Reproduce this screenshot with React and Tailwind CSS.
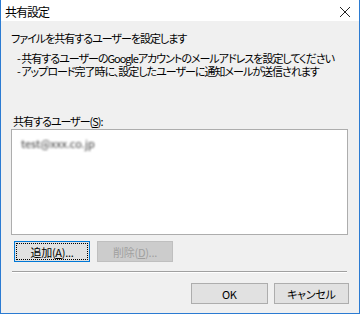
export default function App() {
  const font = { fontFamily: '"Noto Sans CJK JP", "Noto Sans", sans-serif' };
  return (
    <div className="w-[360px] h-[314px] bg-white overflow-hidden" style={font}>
      <div className="w-[360px] h-[314px] flex flex-col border-l border-r border-b border-[#2b7bd2] bg-[#f0f0f0] text-[11px] leading-[14px] tracking-[-1px] text-black whitespace-nowrap [font-feature-settings:'palt']">
        <div className="h-[21px] shrink-0 bg-white flex items-center justify-between pl-[4px] pr-[6px]">
          <span className="text-[12px] leading-[14px] mt-[2px] tracking-[-1px]">共有設定</span>
          <svg width="12" height="12" viewBox="0 0 12 12" className="mt-[2px] mr-[2px]">
            <path d="M1 1 L11 11 M11 1 L1 11" stroke="#222" strokeWidth="1" />
          </svg>
        </div>
        <div className="flex-1 flex flex-col px-[10px] pt-[10px]">
          <div className="h-[14px] mb-[7px]">ファイルを共有するユーザーを設定します</div>
          <div className="h-[12px] leading-[12px] pl-[6px] mb-[1px]">- 共有するユーザーのGoogleアカウントのメールアドレスを設定してください</div>
          <div className="h-[12px] leading-[12px] pl-[6px]">- アップロード完了時に、設定したユーザーに通知メールが送信されます</div>
          <div className="h-[14px] mt-[37px] mb-[1px] pl-[2px]">
            共有するユーザー(<span className="underline">S</span>):
          </div>
          <div className="w-[337px] h-[106px] shrink-0 bg-white border border-[#adadad] pl-[9px] pt-[6px]">
            <span className="text-[11px] text-[#3a3a3a] blur-[1.3px] tracking-normal">test@xxx.co.jp</span>
          </div>
          <div className="flex gap-[7px] mt-[6px] pl-[3px] tracking-[-0.3px]">
            <div className="w-[76px] h-[21px] border border-[#0078d7] bg-[#e1e1e1] p-[1px]">
              <div className="w-full h-full border border-dotted border-black flex items-center justify-center">
                追加(<span className="underline">A</span>)...
              </div>
            </div>
            <div className="w-[76px] h-[21px] border border-[#bfbfbf] bg-[#cccccc] flex items-center justify-center text-[#a0a0a0]">
              削除(<span className="underline">D</span>)...
            </div>
          </div>
          <div className="mt-[9px] ml-[1px] w-[335px] h-[2px] border-t border-[#a0a0a0] border-b border-b-white"></div>
          <div className="flex gap-[6px] mt-[10px] pl-[180px] tracking-[-0.3px]">
            <div className="w-[77px] h-[21px] border border-[#adadad] bg-[#e1e1e1] flex items-center justify-center">OK</div>
            <div className="w-[76px] h-[21px] border border-[#adadad] bg-[#e1e1e1] flex items-center justify-center">キャンセル</div>
          </div>
        </div>
      </div>
    </div>
  );
}
